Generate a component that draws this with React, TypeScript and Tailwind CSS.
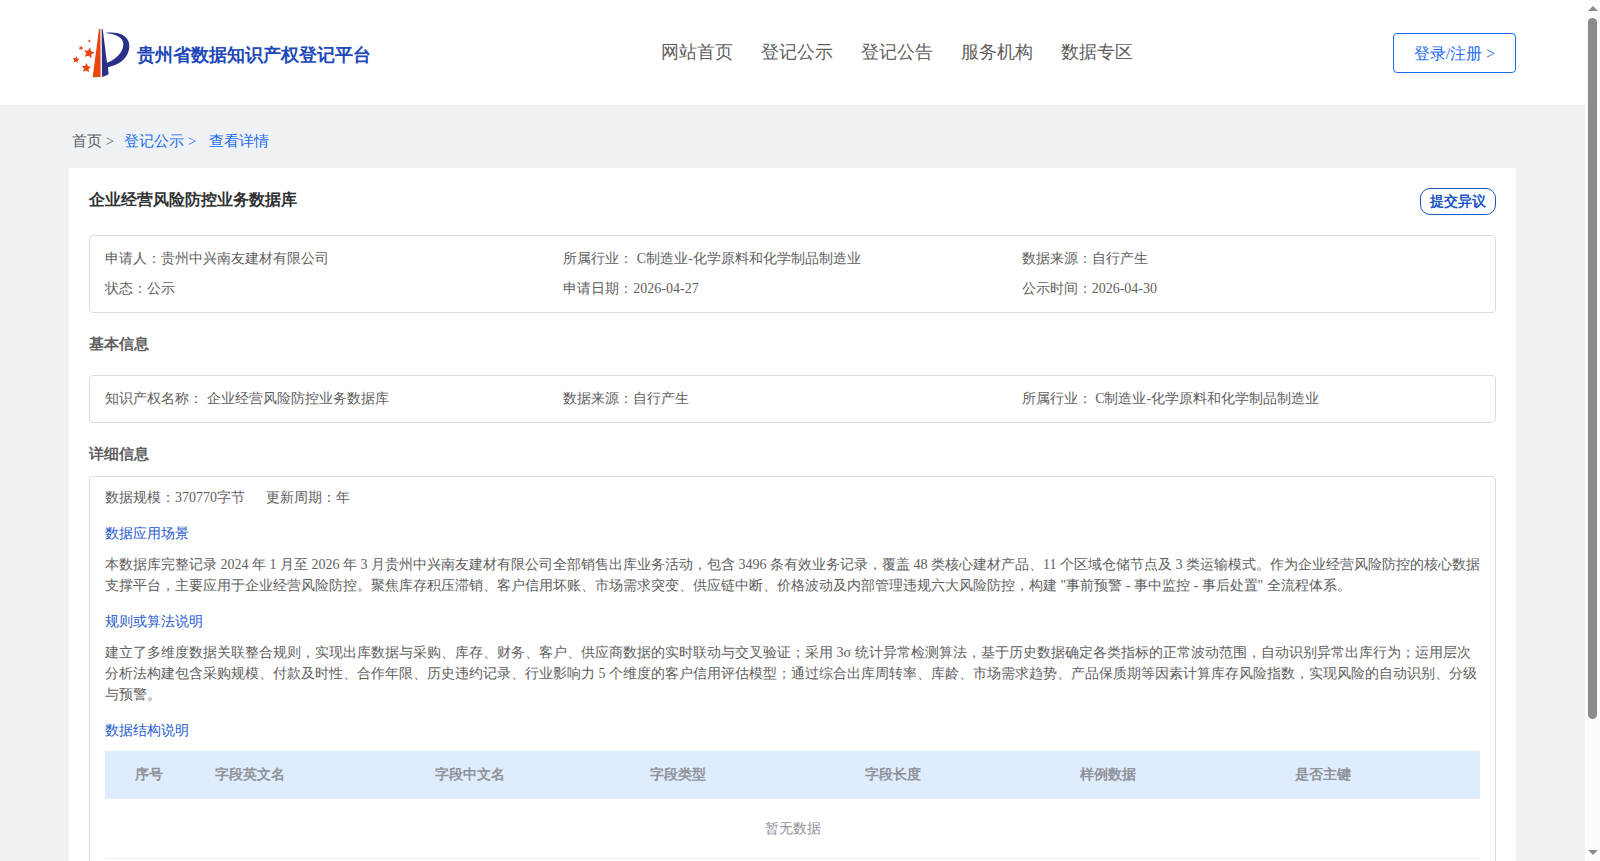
import type { ReactNode } from "react";

const navItems = ["网站首页", "登记公示", "登记公告", "服务机构", "数据专区"];

const summary = [
  "申请人：贵州中兴南友建材有限公司",
  "所属行业： C制造业-化学原料和化学制品制造业",
  "数据来源：自行产生",
  "状态：公示",
  "申请日期：2026-04-27",
  "公示时间：2026-04-30",
];

const basics = [
  "知识产权名称： 企业经营风险防控业务数据库",
  "数据来源：自行产生",
  "所属行业： C制造业-化学原料和化学制品制造业",
];

const columns = [
  { title: "序号", className: "w-[100px] pl-[30px]" },
  { title: "字段英文名", className: "w-[220px] pl-[10px]" },
  { title: "字段中文名", className: "w-[215px] pl-[10px]" },
  { title: "字段类型", className: "w-[215px] pl-[10px]" },
  { title: "字段长度", className: "w-[215px] pl-[10px]" },
  { title: "样例数据", className: "w-[215px] pl-[10px]" },
  { title: "是否主键", className: "pl-[10px]" },
];

const STAR = "M0,-10 L2.9,-3.6 9.5,-3.1 4.6,1.5 5.9,8.1 0,4.8 -5.9,8.1 -4.6,1.5 -9.5,-3.1 -2.9,-3.6Z";

function Logo() {
  return (
    <svg viewBox="36 24 174 150" className="h-[50px] w-[58px] shrink-0" aria-hidden="true">
      <g fill="#e84510">
        <path d="M117,27 L121,27 122,171 98,172Z" />
        <path d={STAR} transform="translate(87 99) rotate(12) scale(1.7)" />
        <path d={STAR} transform="translate(48 119) rotate(8) scale(1.1)" />
        <path d={STAR} transform="translate(79 144) rotate(4) scale(1.5)" />
        <path d={STAR} transform="translate(63 84) rotate(25) scale(0.75)" />
        <path d={STAR} transform="translate(88 63) scale(0.5)" />
      </g>
      <path
        fill="#2a2f88"
        d="M125,27 L128,27 141,128 C166,120 190,98 190,72 C190,52 165,41 135,39 C172,33 208,45 208,78 C208,112 180,134 144,142 L146,163 Q138,168 126,171Z"
      />
    </svg>
  );
}

function InfoBox({ items }: { items: string[] }) {
  return (
    <ul className="grid grid-cols-3 rounded border border-[#dcdddf] px-[15px] py-2">
      {items.map((item) => (
        <li key={item} className="leading-[30px]">
          {item}
        </li>
      ))}
    </ul>
  );
}

function Section({ title, children }: { title: string; children: ReactNode }) {
  return (
    <section className="mt-[15px]">
      <h3 className="mb-[10px] text-[#1d5bd0]">{title}</h3>
      {children}
    </section>
  );
}

function ScrollBar() {
  return (
    <div className="flex w-[15px] shrink-0 flex-col items-center bg-[#fcfcfc] py-[6px]" aria-hidden="true">
      <svg viewBox="0 0 10 5" className="h-[5px] w-[10px]" fill="#8b8b8b">
        <path d="M5 0 10 5H0Z" />
      </svg>
      <div className="my-[7px] flex w-[9px] flex-1 flex-col">
        <div className="h-[85%] rounded-full bg-[#8b8b8b]" />
      </div>
      <svg viewBox="0 0 10 5" className="h-[5px] w-[10px]" fill="#8b8b8b">
        <path d="M0 0H10L5 5Z" />
      </svg>
    </div>
  );
}

export default function App() {
  return (
    <div className="flex h-screen overflow-hidden bg-[#eef2f5] font-['Liberation_Serif',serif] text-[14px] leading-[21px] text-[#606060]">
      <div className="min-w-0 flex-1 overflow-hidden">
        <header className="flex h-[105px] items-center justify-between bg-white px-[69px]">
          <a href="#" className="flex w-[332px] items-center gap-[7px] pl-[3px]">
            <Logo />
            <span className="pt-1 text-[18px] leading-6 font-bold whitespace-nowrap text-[#2148b8]">
              贵州省数据知识产权登记平台
            </span>
          </a>
          <nav className="flex gap-7 pb-[2px] text-[18px] leading-6">
            {navItems.map((item) => (
              <a key={item} href="#" className="whitespace-nowrap">
                {item}
              </a>
            ))}
          </nav>
          <button
            type="button"
            className="h-10 w-[123px] rounded border border-[#1a6df0] pt-[2px] text-[16px] leading-6 text-[#1a6df0]"
          >
            登录/注册 &gt;
          </button>
        </header>

        <main className="px-[69px]">
          <nav className="flex h-[63px] items-center pt-[9px] pl-[3px] text-[15px]">
            <a href="#" className="mr-[10px]">
              首页 &gt;
            </a>
            <a href="#" className="mr-[13px] text-[#1a6df0]">
              登记公示 &gt;
            </a>
            <a href="#" className="text-[#1a6df0]">
              查看详情
            </a>
          </nav>

          <article className="bg-white p-5">
            <div className="mb-5 flex h-[27px] items-start justify-between">
              <h1 className="text-[16px] leading-6 font-bold text-[#303133]">企业经营风险防控业务数据库</h1>
              <button
                type="button"
                className="h-[27px] w-[76px] rounded-[10px] border border-[#1a56c4] font-bold text-[#1a56c4]"
              >
                提交异议
              </button>
            </div>
            <InfoBox items={summary} />

            <h2 className="py-5 text-[15px] leading-[22px] font-bold">基本信息</h2>
            <InfoBox items={basics} />

            <h2 className="pt-5 pb-[11px] text-[15px] leading-[22px] font-bold">详细信息</h2>
            <div className="rounded border border-[#dcdddf] px-[15px] py-[10px]">
              <p className="flex gap-[21px]">
                <span>数据规模：370770字节</span>
                <span>更新周期：年</span>
              </p>
              <Section title="数据应用场景">
                <p>
                  本数据库完整记录 2024 年 1 月至 2026 年 3 月贵州中兴南友建材有限公司全部销售出库业务活动，包含 3496
                  条有效业务记录，覆盖 48 类核心建材产品、11 个区域仓储节点及 3
                  类运输模式。作为企业经营风险防控的核心数据支撑平台，主要应用于企业经营风险防控。聚焦库存积压滞销、客户信用坏账、市场需求突变、供应链中断、价格波动及内部管理违规六大风险防控，构建
                  "事前预警 - 事中监控 - 事后处置" 全流程体系。
                </p>
              </Section>
              <Section title="规则或算法说明">
                <p>
                  建立了多维度数据关联整合规则，实现出库数据与采购、库存、财务、客户、供应商数据的实时联动与交叉验证；采用
                  3σ
                  统计异常检测算法，基于历史数据确定各类指标的正常波动范围，自动识别异常出库行为；运用层次分析法构建包含采购规模、付款及时性、合作年限、历史违约记录、行业影响力
                  5
                  个维度的客户信用评估模型；通过综合出库周转率、库龄、市场需求趋势、产品保质期等因素计算库存风险指数，实现风险的自动识别、分级与预警。
                </p>
              </Section>
              <Section title="数据结构说明">
                <table className="w-full table-fixed border-separate border-spacing-0 text-left text-[#909399]">
                  <thead>
                    <tr className="h-12 bg-[#dfecfe]">
                      {columns.map((column) => (
                        <th
                          key={column.title}
                          scope="col"
                          className={`border-b border-[#ebeef5] ${column.className}`}
                        >
                          {column.title}
                        </th>
                      ))}
                    </tr>
                  </thead>
                  <tbody>
                    <tr className="h-[60px]">
                      <td colSpan={7} className="border-b border-[#ebeef5] text-center">
                        暂无数据
                      </td>
                    </tr>
                  </tbody>
                </table>
              </Section>
            </div>
          </article>
        </main>
      </div>
      <ScrollBar />
    </div>
  );
}
